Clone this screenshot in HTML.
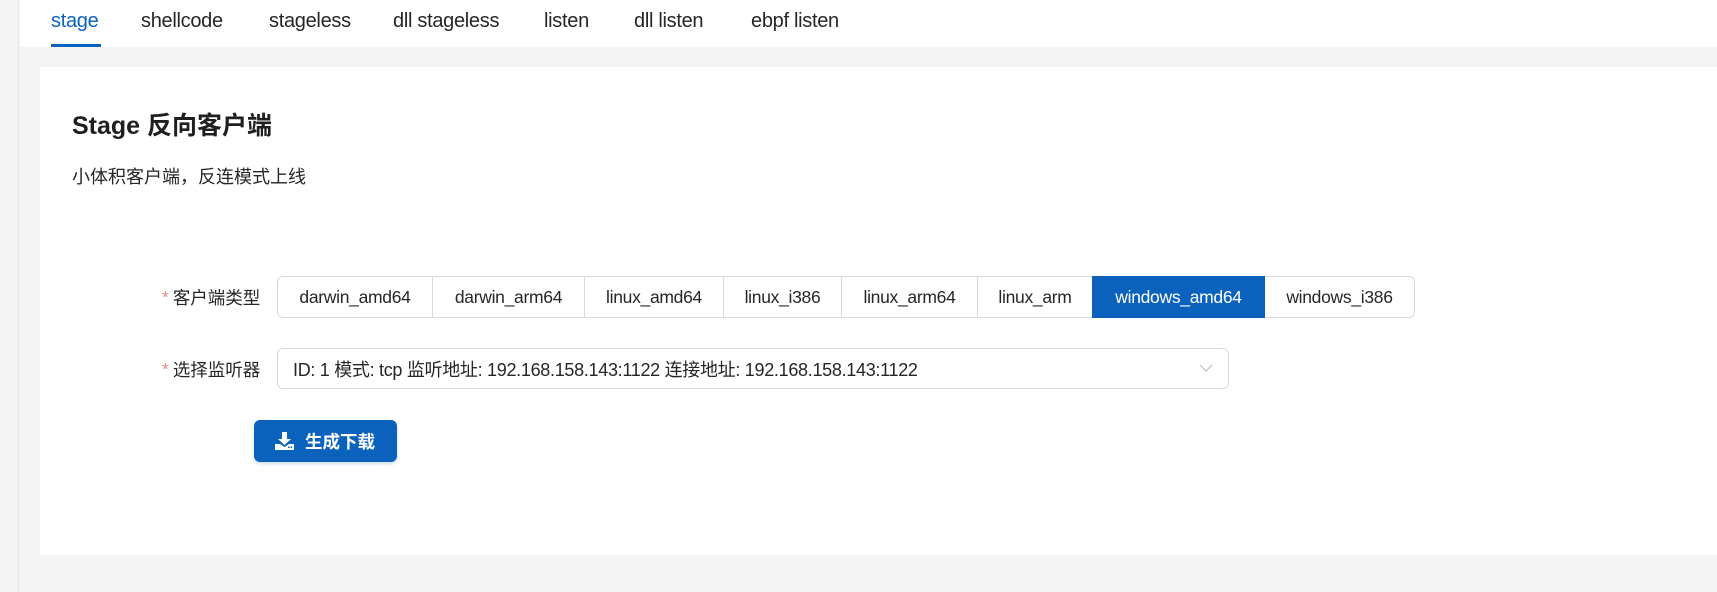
<!DOCTYPE html>
<html><head><meta charset="utf-8"><style>
*{margin:0;padding:0;box-sizing:border-box}
body{width:1717px;height:592px;background:#f4f4f4;font-family:"Liberation Sans","Noto Sans CJK SC",sans-serif;color:#1f1f1f;position:relative;overflow:hidden}
.strip{position:absolute;left:0;top:0;width:19px;height:592px;background:#f4f4f4;border-right:1px solid #e6e6e6}
.hdr{position:absolute;left:20px;top:0;right:0;height:47px;background:#fff}
.tab{position:absolute;top:10px;font-size:20px;color:#262626;white-space:nowrap;letter-spacing:-0.3px}
.tab.on{color:#0b62bd}
.ul{position:absolute;left:51px;top:44px;width:50px;height:3px;background:#0b62bd}
.card{position:absolute;left:40px;top:67px;right:0;height:488px;background:#fff}
.abs{position:absolute;white-space:nowrap}
.seg{position:absolute;top:276px;height:42px;border:1px solid #d9d9d9;display:flex;align-items:center;justify-content:center;font-size:17.5px;color:#262626;background:#fff;letter-spacing:-0.3px;white-space:nowrap}
.seg.on{background:#0b62bd;color:#fff;border-color:#0b62bd}
.lbl{position:absolute;font-size:17.5px;color:#262626;height:40px;display:flex;align-items:center;white-space:nowrap}
.lbl b{color:#e88a8a;font-weight:normal;margin-right:4px}
</style></head><body>
<div class="strip"></div>
<div class="hdr"></div>
<div class="tab on" style="left:51px">stage</div>
<div class="tab" style="left:141px">shellcode</div>
<div class="tab" style="left:269px">stageless</div>
<div class="tab" style="left:393px">dll stageless</div>
<div class="tab" style="left:544px">listen</div>
<div class="tab" style="left:634px">dll listen</div>
<div class="tab" style="left:751px">ebpf listen</div>
<div class="ul"></div>
<div class="card"></div>
<div class="abs" style="left:72px;top:106px;font-size:25px;font-weight:bold;color:#1f1f1f">Stage 反向客户端</div>
<div class="abs" style="left:72px;top:163px;font-size:18px;color:#262626">小体积客户端，反连模式上线</div>

<div class="lbl" style="left:162px;top:277px"><b>*</b>客户端类型</div>
<div class="seg" style="left:277px;width:156px;border-radius:6px 0 0 6px">darwin_amd64</div>
<div class="seg" style="left:432px;width:153px">darwin_arm64</div>
<div class="seg" style="left:584px;width:140px">linux_amd64</div>
<div class="seg" style="left:723px;width:119px">linux_i386</div>
<div class="seg" style="left:841px;width:137px">linux_arm64</div>
<div class="seg" style="left:977px;width:116px">linux_arm</div>
<div class="seg" style="left:1264px;width:151px;border-radius:0 6px 6px 0">windows_i386</div>
<div class="seg on" style="left:1092px;width:173px">windows_amd64</div>

<div class="lbl" style="left:162px;top:349px"><b>*</b>选择监听器</div>
<div class="abs" style="left:277px;top:348px;width:952px;height:41px;border:1px solid #d9d9d9;border-radius:6px;background:#fff"></div>
<div class="abs" style="left:293px;top:348px;height:41px;display:flex;align-items:center;font-size:18px;color:#262626;letter-spacing:-0.3px">ID: 1 模式: tcp 监听地址: 192.168.158.143:1122 连接地址: 192.168.158.143:1122</div>
<svg class="abs" style="left:1199px;top:362px" width="14" height="12" viewBox="0 0 14 12"><path d="M1 3 L7 9 L13 3" fill="none" stroke="#bfbfbf" stroke-width="1.2"/></svg>

<div class="abs" style="left:254px;top:420px;width:143px;height:42px;background:#0b62bd;border-radius:6px;box-shadow:0 2px 3px rgba(11,98,189,.2)"></div>
<svg class="abs" style="left:275px;top:432px" width="19" height="18" viewBox="0 0 19 18"><path d="M7 0h5v7h4l-6.5 6L3 7h4z" fill="#fff"/><path d="M0 12h5l4.5 3 4.5-3h5v6H0z" fill="#fff"/><rect x="13" y="14.5" width="1.5" height="1.5" fill="#0b62bd"/><rect x="15.5" y="14.5" width="1.5" height="1.5" fill="#0b62bd"/></svg>
<div class="abs" style="left:305px;top:420px;height:42px;display:flex;align-items:center;font-size:17.5px;font-weight:bold;color:#fff">生成下载</div>
</body></html>
